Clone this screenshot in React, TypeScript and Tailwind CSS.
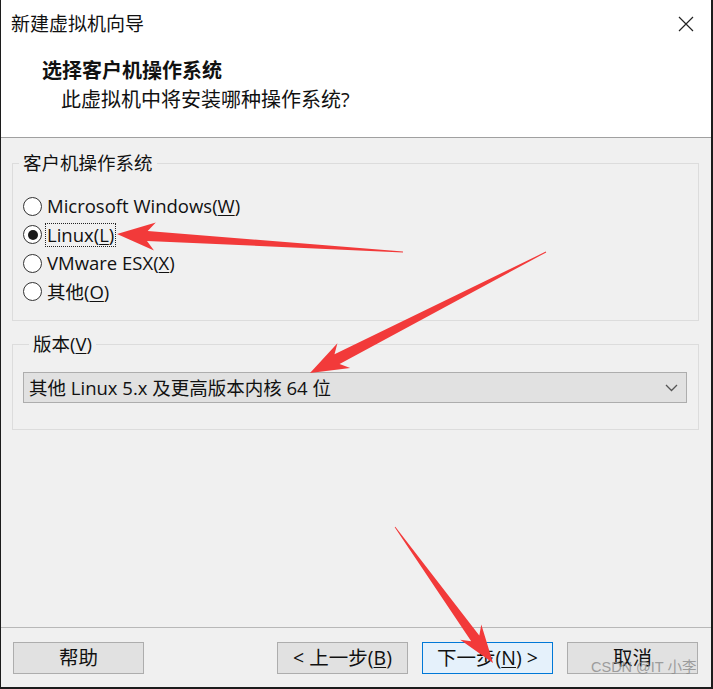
import React from "react";

const font = "font-['Open_Sans','Noto_Sans_CJK_SC',sans-serif]";

type Pt = [number, number];

// tapered annotation arrow, thin at the tail, solid head at the tip
function arrowPoints(tail: Pt, tip: Pt, headLen: number, headW: number, neckW: number, tailW: number) {
  const dx = tip[0] - tail[0];
  const dy = tip[1] - tail[1];
  const len = Math.hypot(dx, dy);
  const ux = dx / len;
  const uy = dy / len;
  const nx = -uy;
  const ny = ux;
  const bx = tip[0] - ux * headLen;
  const by = tip[1] - uy * headLen;
  const nbx = tip[0] - ux * headLen * 0.8;
  const nby = tip[1] - uy * headLen * 0.8;
  const pts: Pt[] = [
    [tail[0] + (nx * tailW) / 2, tail[1] + (ny * tailW) / 2],
    [nbx + (nx * neckW) / 2, nby + (ny * neckW) / 2],
    [bx + (nx * headW) / 2, by + (ny * headW) / 2],
    tip,
    [bx - (nx * headW) / 2, by - (ny * headW) / 2],
    [nbx - (nx * neckW) / 2, nby - (ny * neckW) / 2],
    [tail[0] - (nx * tailW) / 2, tail[1] - (ny * tailW) / 2],
  ];
  return pts.map((p) => `${p[0].toFixed(1)},${p[1].toFixed(1)}`).join(" ");
}

function Radio({ checked, children, focus }: { checked?: boolean; children: React.ReactNode; focus?: boolean }) {
  return (
    <div className="flex items-center h-[28.5px] pl-[10px]">
      <span className="w-[19px] h-[19px] rounded-full border border-[#333333] bg-white flex items-center justify-center shrink-0">
        {checked && <span className="w-[10px] h-[10px] rounded-full bg-[#1a1a1a]" />}
      </span>
      <span
        className={
          focus
            ? "ml-[4px] px-[1px] leading-[22px] outline outline-1 outline-dotted outline-[#222]"
            : "ml-[5px] leading-[22px]"
        }
      >
        {children}
      </span>
    </div>
  );
}

function Btn({ children, primary }: { children: React.ReactNode; primary?: boolean }) {
  return (
    <div
      className={
        "w-[131px] h-[32px] flex items-center justify-center border text-[19.5px] " +
        (primary ? "bg-[#e5f1fb] border-[#0078d7]" : "bg-[#e1e1e1] border-[#adadad]")
      }
    >
      {children}
    </div>
  );
}

export default function App() {
  return (
    <div
      className={`${font} relative w-[713px] h-[689px] overflow-hidden bg-[#f0f0f0] text-[#111] border-l border-r-2 border-b-2 border-[#1c1c1c] flex flex-col`}
    >
      {/* header */}
      <div className="bg-white h-[138px] border-b border-[#a0a0a0] shrink-0">
        <div className="h-[48px] flex items-center justify-between pl-[10px] pr-[17px]">
          <span className="text-[19px]">新建虚拟机向导</span>
          <svg width="16" height="16" viewBox="0 0 16 16" className="text-[#222]">
            <path d="M1 1 L15 15 M15 1 L1 15" stroke="currentColor" strokeWidth="1.2" />
          </svg>
        </div>
        <div className="mt-[11px] pl-[41px] text-[20px] font-bold leading-[24px]">选择客户机操作系统</div>
        <div className="mt-[5px] pl-[60px] text-[20px] leading-[24px]">此虚拟机中将安装哪种操作系统?</div>
      </div>

      {/* body */}
      <div className="flex-1 pl-[11px] pr-[12px] text-[18.5px]">
        <fieldset className="mt-[13px] border border-[#dcdcdc] pt-[17px] pb-[14px]">
          <legend className="ml-[6px] px-[4px] leading-[24px]">客户机操作系统</legend>
          <Radio>
            Microsoft Windows(<u className="underline-offset-2">W</u>)
          </Radio>
          <Radio checked focus>
            Linux(<u className="underline-offset-2">L</u>)
          </Radio>
          <Radio>
            VMware ESX(<u className="underline-offset-2">X</u>)
          </Radio>
          <Radio>
            其他(<u className="underline-offset-2">O</u>)
          </Radio>
        </fieldset>

        <fieldset className="mt-[11px] border border-[#dcdcdc] pt-[16px] pb-[26px] pl-[10px] pr-[11px]">
          <legend className="ml-[6px] px-[4px] leading-[24px]">
            版本(<u className="underline-offset-2">V</u>)
          </legend>
          <div className="h-[31px] bg-[#e1e1e1] border border-[#adadad] flex items-center justify-between pl-[5px] pr-[8px]">
            <span>其他 Linux 5.x 及更高版本内核 64 位</span>
            <svg width="13" height="8" viewBox="0 0 13 8">
              <path d="M1 1 L6.5 6.5 L12 1" fill="none" stroke="#555" strokeWidth="1.3" />
            </svg>
          </div>
        </fieldset>
      </div>

      {/* footer */}
      <div className="h-[60px] shrink-0 border-t border-[#b8b8b8] pt-[14px] pl-[12px] pr-[13px] flex">
        <div className="w-[132px]">
          <Btn>帮助</Btn>
        </div>
        <div className="flex-1" />
        <div className="flex gap-[14px]">
          <Btn>
            &lt; 上一步(<u className="underline-offset-2">B</u>)
          </Btn>
          <Btn primary>
            下一步(<u className="underline-offset-2">N</u>) &gt;
          </Btn>
          <Btn>取消</Btn>
        </div>
      </div>

      {/* annotation arrows */}
      <svg className="absolute left-0 top-0 pointer-events-none" width="713" height="689" viewBox="0 0 713 689">
        <polygon points={arrowPoints([402, 252], [116, 234], 38, 28, 10, 0.8)} fill="#f23a3a" />
        <polygon points={arrowPoints([545, 252], [309, 373], 38, 28, 11, 0.8)} fill="#f23a3a" />
        <polygon points={arrowPoints([394, 527], [492, 663], 38, 26, 10, 0.8)} fill="#f23a3a" />
      </svg>

      <span className="absolute left-[590px] top-[657px] text-[14.5px] text-[#8c8c8c] opacity-80 font-['Liberation_Sans','Noto_Sans_CJK_SC',sans-serif] pointer-events-none">
        CSDN @IT 小李
      </span>
    </div>
  );
}
